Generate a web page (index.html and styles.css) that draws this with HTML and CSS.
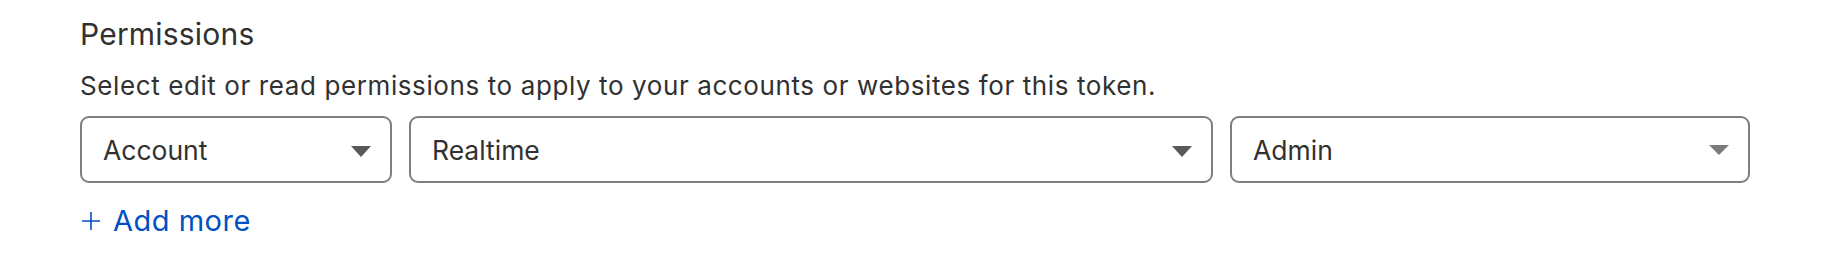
FILE: index.html
```html
<!DOCTYPE html>
<html lang="en">
<head>
    <meta charset="UTF-8">
    <meta name="viewport" content="width=device-width, initial-scale=1.0">
    <title>Permissions</title>
    <link rel="stylesheet" href="styles.css">
</head>
<body>
    <div class="container">
        <h2 class="section-title">Permissions</h2>
        <p class="section-desc">Select edit or read permissions to apply to your accounts or websites for this token.</p>

        <div class="perm-row">
            <div class="select select-scope">
                <span>Account</span>
                <svg class="caret" width="20" height="11" viewBox="0 0 20 11"><path d="M0 0h20L10 11z"/></svg>
            </div>
            <div class="select select-group">
                <span>Realtime</span>
                <svg class="caret" width="20" height="11" viewBox="0 0 20 11"><path d="M0 0h20L10 11z"/></svg>
            </div>
            <div class="select select-level">
                <span>Admin</span>
                <svg class="caret light" width="20" height="10" viewBox="0 0 20 10"><path d="M0 0h20L10 10z"/></svg>
            </div>
        </div>

        <a class="add-more" href="#">
            <svg width="18" height="18" viewBox="0 0 18 18"><path d="M9 0v18M0 9h18" stroke="currentColor" stroke-width="1.6" fill="none"/></svg>
            Add more
        </a>
    </div>
</body>
</html>
```

FILE: styles.css
```css
body {
    font-family: Inter, "Noto Sans", sans-serif;
    color: #313131;
    margin: 0;
    background: #fff;
}
.container {
    padding: 16px 0 0 80px;
}
.section-title {
    font-size: 30px;
    line-height: 36px;
    font-weight: 400;
    margin: 0;
    letter-spacing: 0.2px;
}
.section-desc {
    font-size: 26px;
    line-height: 32px;
    margin: 18px 0 0;
    letter-spacing: 0.6px;
}
.perm-row {
    display: flex;
    gap: 17px;
    margin-top: 14px;
}
.select {
    box-sizing: border-box;
    height: 67px;
    border: 2px solid #7e7e7e;
    border-radius: 9px;
    display: flex;
    align-items: center;
    justify-content: space-between;
    padding: 0 19px 0 21px;
    font-size: 26.5px;
    line-height: 32px;
}
.select-scope {
    width: 312px;
}
.select-group {
    width: 804px;
}
.select-level {
    width: 520px;
}
.caret {
    fill: #595959;
    margin-top: 4px;
}
.caret.light {
    fill: #7a7a7a;
    margin-top: 0;
}
.add-more {
    display: inline-flex;
    align-items: center;
    gap: 13px;
    margin-top: 20px;
    margin-left: 2px;
    color: #0051c3;
    text-decoration: none;
    font-size: 29px;
    line-height: 36px;
    letter-spacing: 0.5px;
}
```
